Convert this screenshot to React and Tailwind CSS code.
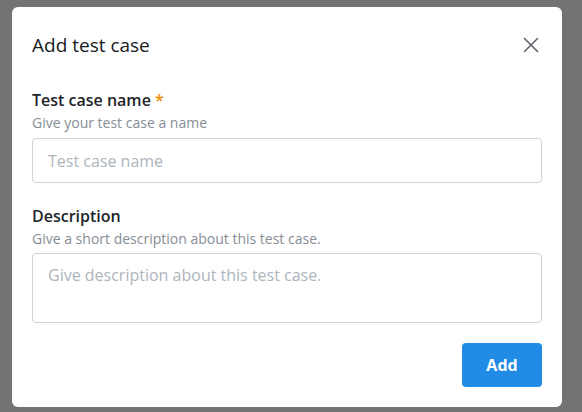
import React from "react";

export default function App() {
  return (
    <div className="w-[582px] h-[412px] bg-[#737373] pl-[12px] pt-[7px] overflow-hidden" style={{ fontFamily: '"Open Sans", "Noto Sans", sans-serif' }}>
      <div className="w-[550px] h-[400px] bg-white rounded-[6px] px-[20px] pt-[25px] flex flex-col">
        <div className="flex items-center justify-between h-[26px]">
          <h2 className="text-[19px] text-[#1a1b1e] leading-[26px]">Add test case</h2>
          <button className="w-[24px] h-[24px] flex items-center justify-center text-[#5c5f66] mr-[-1px]">
            <svg width="16" height="16" viewBox="0 0 16 16" fill="none" stroke="currentColor" strokeWidth="1.5" strokeLinecap="round">
              <path d="M1.5 1.5 L14.5 14.5 M14.5 1.5 L1.5 14.5" />
            </svg>
          </button>
        </div>

        <div className="mt-[31px] flex flex-col">
          <label className="text-[16px] font-semibold text-[#212529] leading-[22px]">
            Test case name <span className="text-[#f08c00]">*</span>
          </label>
          <p className="text-[14px] text-[#868e96] leading-[20px] mt-[2px]">Give your test case a name</p>
          <input
            className="mt-[5px] h-[45px] w-full border border-[#ced4da] rounded-[4px] px-[15px] text-[16px] text-[#212529] placeholder:text-[#adb5bd] outline-none"
            placeholder="Test case name"
          />
        </div>

        <div className="mt-[22px] flex flex-col">
          <label className="text-[16px] font-semibold text-[#212529] leading-[22px]">Description</label>
          <p className="text-[14px] text-[#868e96] leading-[20px] mt-[2px]">Give a short description about this test case.</p>
          <textarea
            className="mt-[4px] h-[70px] w-full border border-[#ced4da] rounded-[4px] px-[15px] py-[9px] text-[16px] text-[#212529] placeholder:text-[#adb5bd] outline-none resize-none"
            placeholder="Give description about this test case."
          />
        </div>

        <div className="mt-[20px] flex justify-end">
          <button className="w-[80px] h-[44px] bg-[#228be6] rounded-[4px] text-white text-[16px] font-bold">Add</button>
        </div>
      </div>
    </div>
  );
}
